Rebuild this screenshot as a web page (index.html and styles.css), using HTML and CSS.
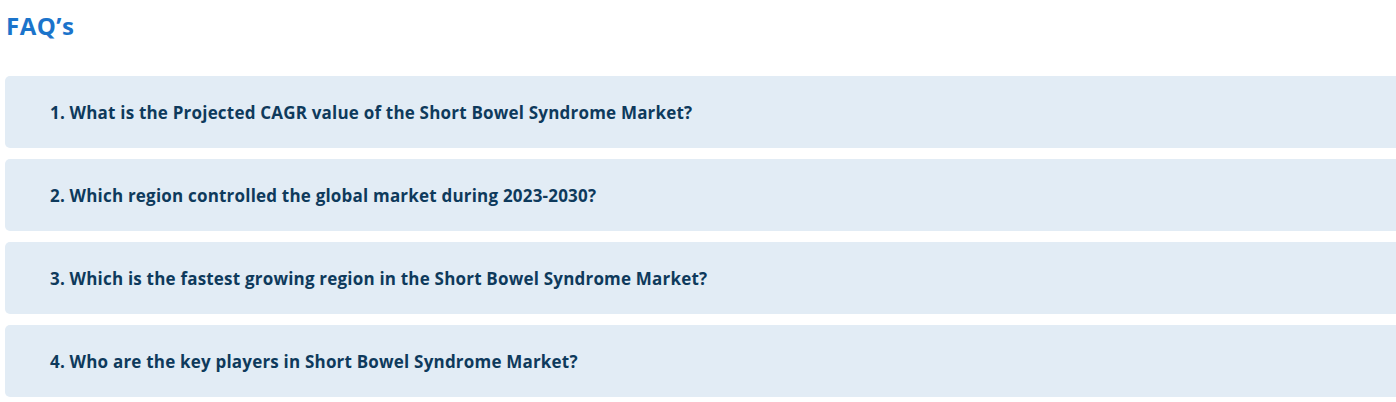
FILE: index.html
```html
<!DOCTYPE html>
<html lang="en">

<head>
    <meta charset="UTF-8">
    <meta name="viewport" content="width=device-width, initial-scale=1.0">
    <title>FAQ's</title>
    <link rel="stylesheet" href="styles.css">
</head>

<body>
    <div class="faq">
        <h2 class="faq-title">FAQ’s</h2>
        <div class="faq-list">
            <div class="faq-item">1. What is the Projected CAGR value of the Short Bowel Syndrome Market?</div>
            <div class="faq-item">2. Which region controlled the global market during 2023-2030?</div>
            <div class="faq-item">3. Which is the fastest growing region in the Short Bowel Syndrome Market?</div>
            <div class="faq-item">4. Who are the key players in Short Bowel Syndrome Market?</div>
        </div>
    </div>
</body>

</html>
```

FILE: styles.css
```css
body {
    margin: 0;
    background-color: #fff;
    font-family: "Open Sans", Lato, Arial, sans-serif;
    overflow: hidden;
}

.faq {
    padding: 11px 0 0 5px;
}

.faq-title {
    margin: 0 0 0 1px;
    font-size: 24px;
    font-weight: 700;
    line-height: 30px;
    letter-spacing: 0.5px;
    color: #1b74cb;
}

.faq-list {
    display: flex;
    flex-direction: column;
    gap: 11px;
    margin-top: 35px;
    margin-right: -10px;
}

.faq-item {
    display: flex;
    align-items: center;
    height: 72px;
    padding-left: 45px;
    background-color: #e2ecf5;
    border-radius: 5px;
    font-size: 17px;
    font-weight: 700;
    letter-spacing: 0.2px;
    color: #0e3a5c;
}
```
